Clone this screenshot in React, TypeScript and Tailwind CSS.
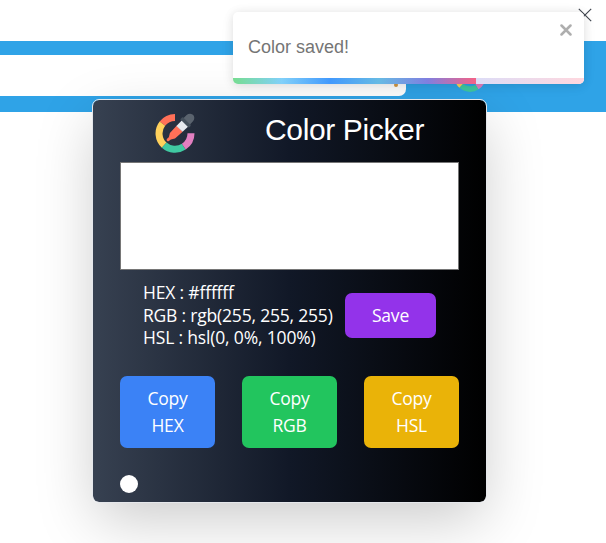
import React from "react";

const copyButtons = [
  { label: "HEX", color: "bg-[#3b82f6]" },
  { label: "RGB", color: "bg-[#22c55e]" },
  { label: "HSL", color: "bg-[#eab308]" },
];

const values = [
  { text: "HEX : #ffffff", width: "tracking-[-0.18px]" },
  { text: "RGB : rgb(255, 255, 255)", width: "tracking-[-0.2px]" },
  { text: "HSL : hsl(0, 0%, 100%)", width: "tracking-[-0.17px]" },
];

function Logo({ className }: { className?: string }) {
  return (
    <svg viewBox="0 0 40 40" className={className} fill="none">
      <g strokeWidth="7">
        <path d="M20 4.4A16 16 0 0 0 7.4 10.6" stroke="#ff7058" />
        <path d="M7.4 10.6A16 16 0 0 0 9.2 32.2" stroke="#ffd15c" />
        <path d="M9.2 32.2A16 16 0 0 0 28.8 33.7" stroke="#40c9a2" />
        <path d="M28.8 33.7A16 16 0 0 0 36 20.3" stroke="#e27fc0" />
      </g>
      <path d="M21.6 12.8 27.6 18.8 20 25.4 15.8 26.6 13.6 28.3Q11.2 28.4 11.8 26L13.8 24.2 14.9 20Z" fill="#ff7058" />
      <path d="M27 7.2 33.2 13.4 27.6 18.8 21.4 12.9Z" fill="#e6e9ee" />
      <path d="M25.2 6.2 27 4.4Q27.7 3.9 28.5 4.6L35.5 11.6Q36.1 12.3 35.6 13L33.8 14.8Z" fill="#434e5a" />
      <path d="M28.6 5 31.6 2.1Q33.2 .7 35.3 .8 39.2 1.2 39.3 5 39.3 6.9 38 8.2L35 11.4Z" fill="#5a636e" />
    </svg>
  );
}

function Toast() {
  return (
    <div className="absolute left-[233px] top-[12px] z-20 flex h-[72px] w-[351px] flex-col overflow-hidden rounded-[5px] bg-white shadow-[0_1px_10px_rgba(0,0,0,0.1),0_2px_15px_rgba(0,0,0,0.05)]">
      <div className="flex flex-1 justify-between pl-[15px] pr-[12px] pt-[12px]">
        <span className="mt-[10px] font-['Liberation_Sans',Arial,sans-serif] text-[18px] leading-[27px] text-[#757575]">
          Color saved!
        </span>
        <svg className="h-[12px] w-[12px]" viewBox="0 0 12 12" fill="none" stroke="#aeaeae" strokeWidth="2.5" strokeLinecap="round">
          <path d="M1.5 1.5 10.5 10.5M10.5 1.5 1.5 10.5" />
        </svg>
      </div>
      <div className="flex h-[6px] bg-[linear-gradient(90deg,#dbe5f8,#dddcf6_70%,#ffd7de)]">
        <div className="h-full w-[243px] bg-[linear-gradient(to_right,#4cd964,#5ac8fa,#007aff,#34aadc,#5856d6,#ff2d55)] opacity-70" />
      </div>
    </div>
  );
}

function PickerCard() {
  return (
    <section className="absolute left-[92px] top-[99px] z-10 h-[404px] w-[395px] rounded-[7px] border border-[#e5e7eb] bg-[linear-gradient(to_right,#374151,#111827,#000000)] bg-clip-padding px-[27px] font-['Open_Sans','Noto_Sans',sans-serif] text-white shadow-[0_20px_60px_-4px_rgba(0,0,0,0.21)]">
      <header className="flex h-[62px] items-start pl-[35px] pt-[13px]">
        <Logo className="h-[40px] w-[40px]" />
        <h1 className="ml-[70px] mt-[-1px] whitespace-nowrap font-['Liberation_Sans',Arial,sans-serif] text-[30px] leading-[36px] tracking-[-0.36px]">
          Color Picker
        </h1>
      </header>
      <div className="h-[108px] w-[339px] border border-[#767676] bg-white" />
      <div className="mt-[11px] flex h-[69px] pl-[23px]">
        <div className="w-[202px] whitespace-nowrap text-[17.5px] leading-[22.5px]">
          {values.map((value) => (
            <p key={value.text} className={value.width}>{value.text}</p>
          ))}
        </div>
        <button className="mt-[12px] h-[45px] w-[91px] rounded-[7px] bg-[#9333ea] text-[17.5px] tracking-[-0.2px]">
          Save
        </button>
      </div>
      <div className="mt-[26px] flex gap-[27px]">
        {copyButtons.map(({ label, color }) => (
          <button key={label} className={`${color} h-[72px] w-[95px] rounded-[7px] text-[17.5px] leading-[27px] tracking-[-0.2px]`}>
            Copy
            <br />
            {label}
          </button>
        ))}
      </div>
      <div className="mt-[27px] h-[18px] w-[18px] rounded-full bg-white" />
    </section>
  );
}

export default function App() {
  return (
    <main className="relative h-[543px] w-[606px] overflow-hidden bg-white">
      <div className="flex h-[41px] justify-end pr-[14px] pt-[8px]">
        <svg className="h-[14px] w-[14px]" viewBox="0 0 14 14" fill="none" stroke="#414750" strokeWidth="1.15">
          <path d="M.8.8 13.2 13.2M13.2.8.8 13.2" />
        </svg>
      </div>
      <div className="flex h-[71px] items-start bg-[#2fa3e7] pt-[14px]">
        <div className="flex h-[41px] w-[406px] items-end justify-end rounded-r-[7px] bg-white pb-[9px] pr-[8px]">
          <span className="h-[4px] w-[4px] rounded-full bg-[#d59a45]" />
        </div>
        <Logo className="ml-[48px] mt-[5px] h-[32px] w-[32px]" />
      </div>
      <PickerCard />
      <Toast />
    </main>
  );
}
